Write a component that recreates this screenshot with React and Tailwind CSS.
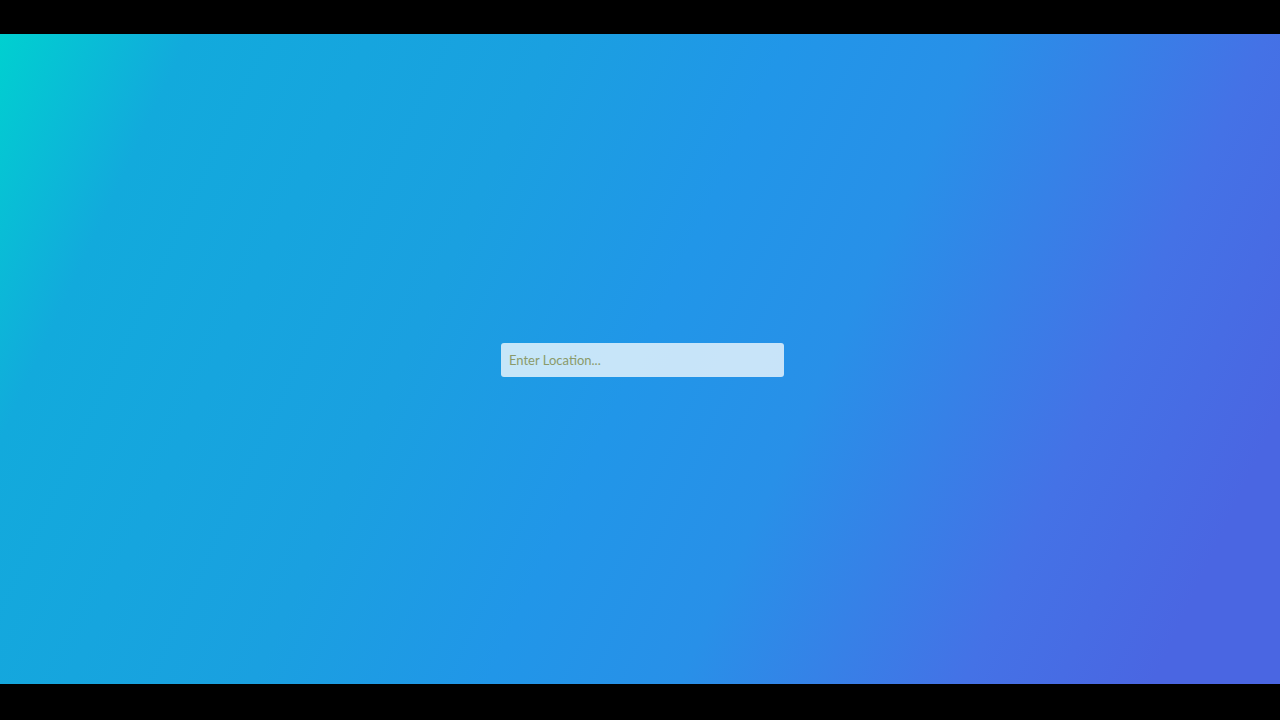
export default function App() {
  return (
    <div className="h-[720px] w-full bg-black flex flex-col">
      <div className="h-[34px] shrink-0" />
      <div className="h-[650px] shrink-0 flex items-center justify-center bg-[linear-gradient(115deg,#00d0d0_0%,#12aadc_12%,#1aa0e0_35%,#2196e8_50%,#2890e8_62%,#4472e6_80%,#4a66e2_92%)]">
        <input
          type="text"
          placeholder="Enter Location..."
          className="ml-[5px] w-[283px] h-[34px] mt-[1px] rounded-[3px] bg-white/75 px-2 text-[13px] text-gray-700 placeholder:text-[#8a9a6a] outline-none font-['Lato','Open_Sans',sans-serif]"
        />
      </div>
      <div className="flex-1" />
    </div>
  );
}
